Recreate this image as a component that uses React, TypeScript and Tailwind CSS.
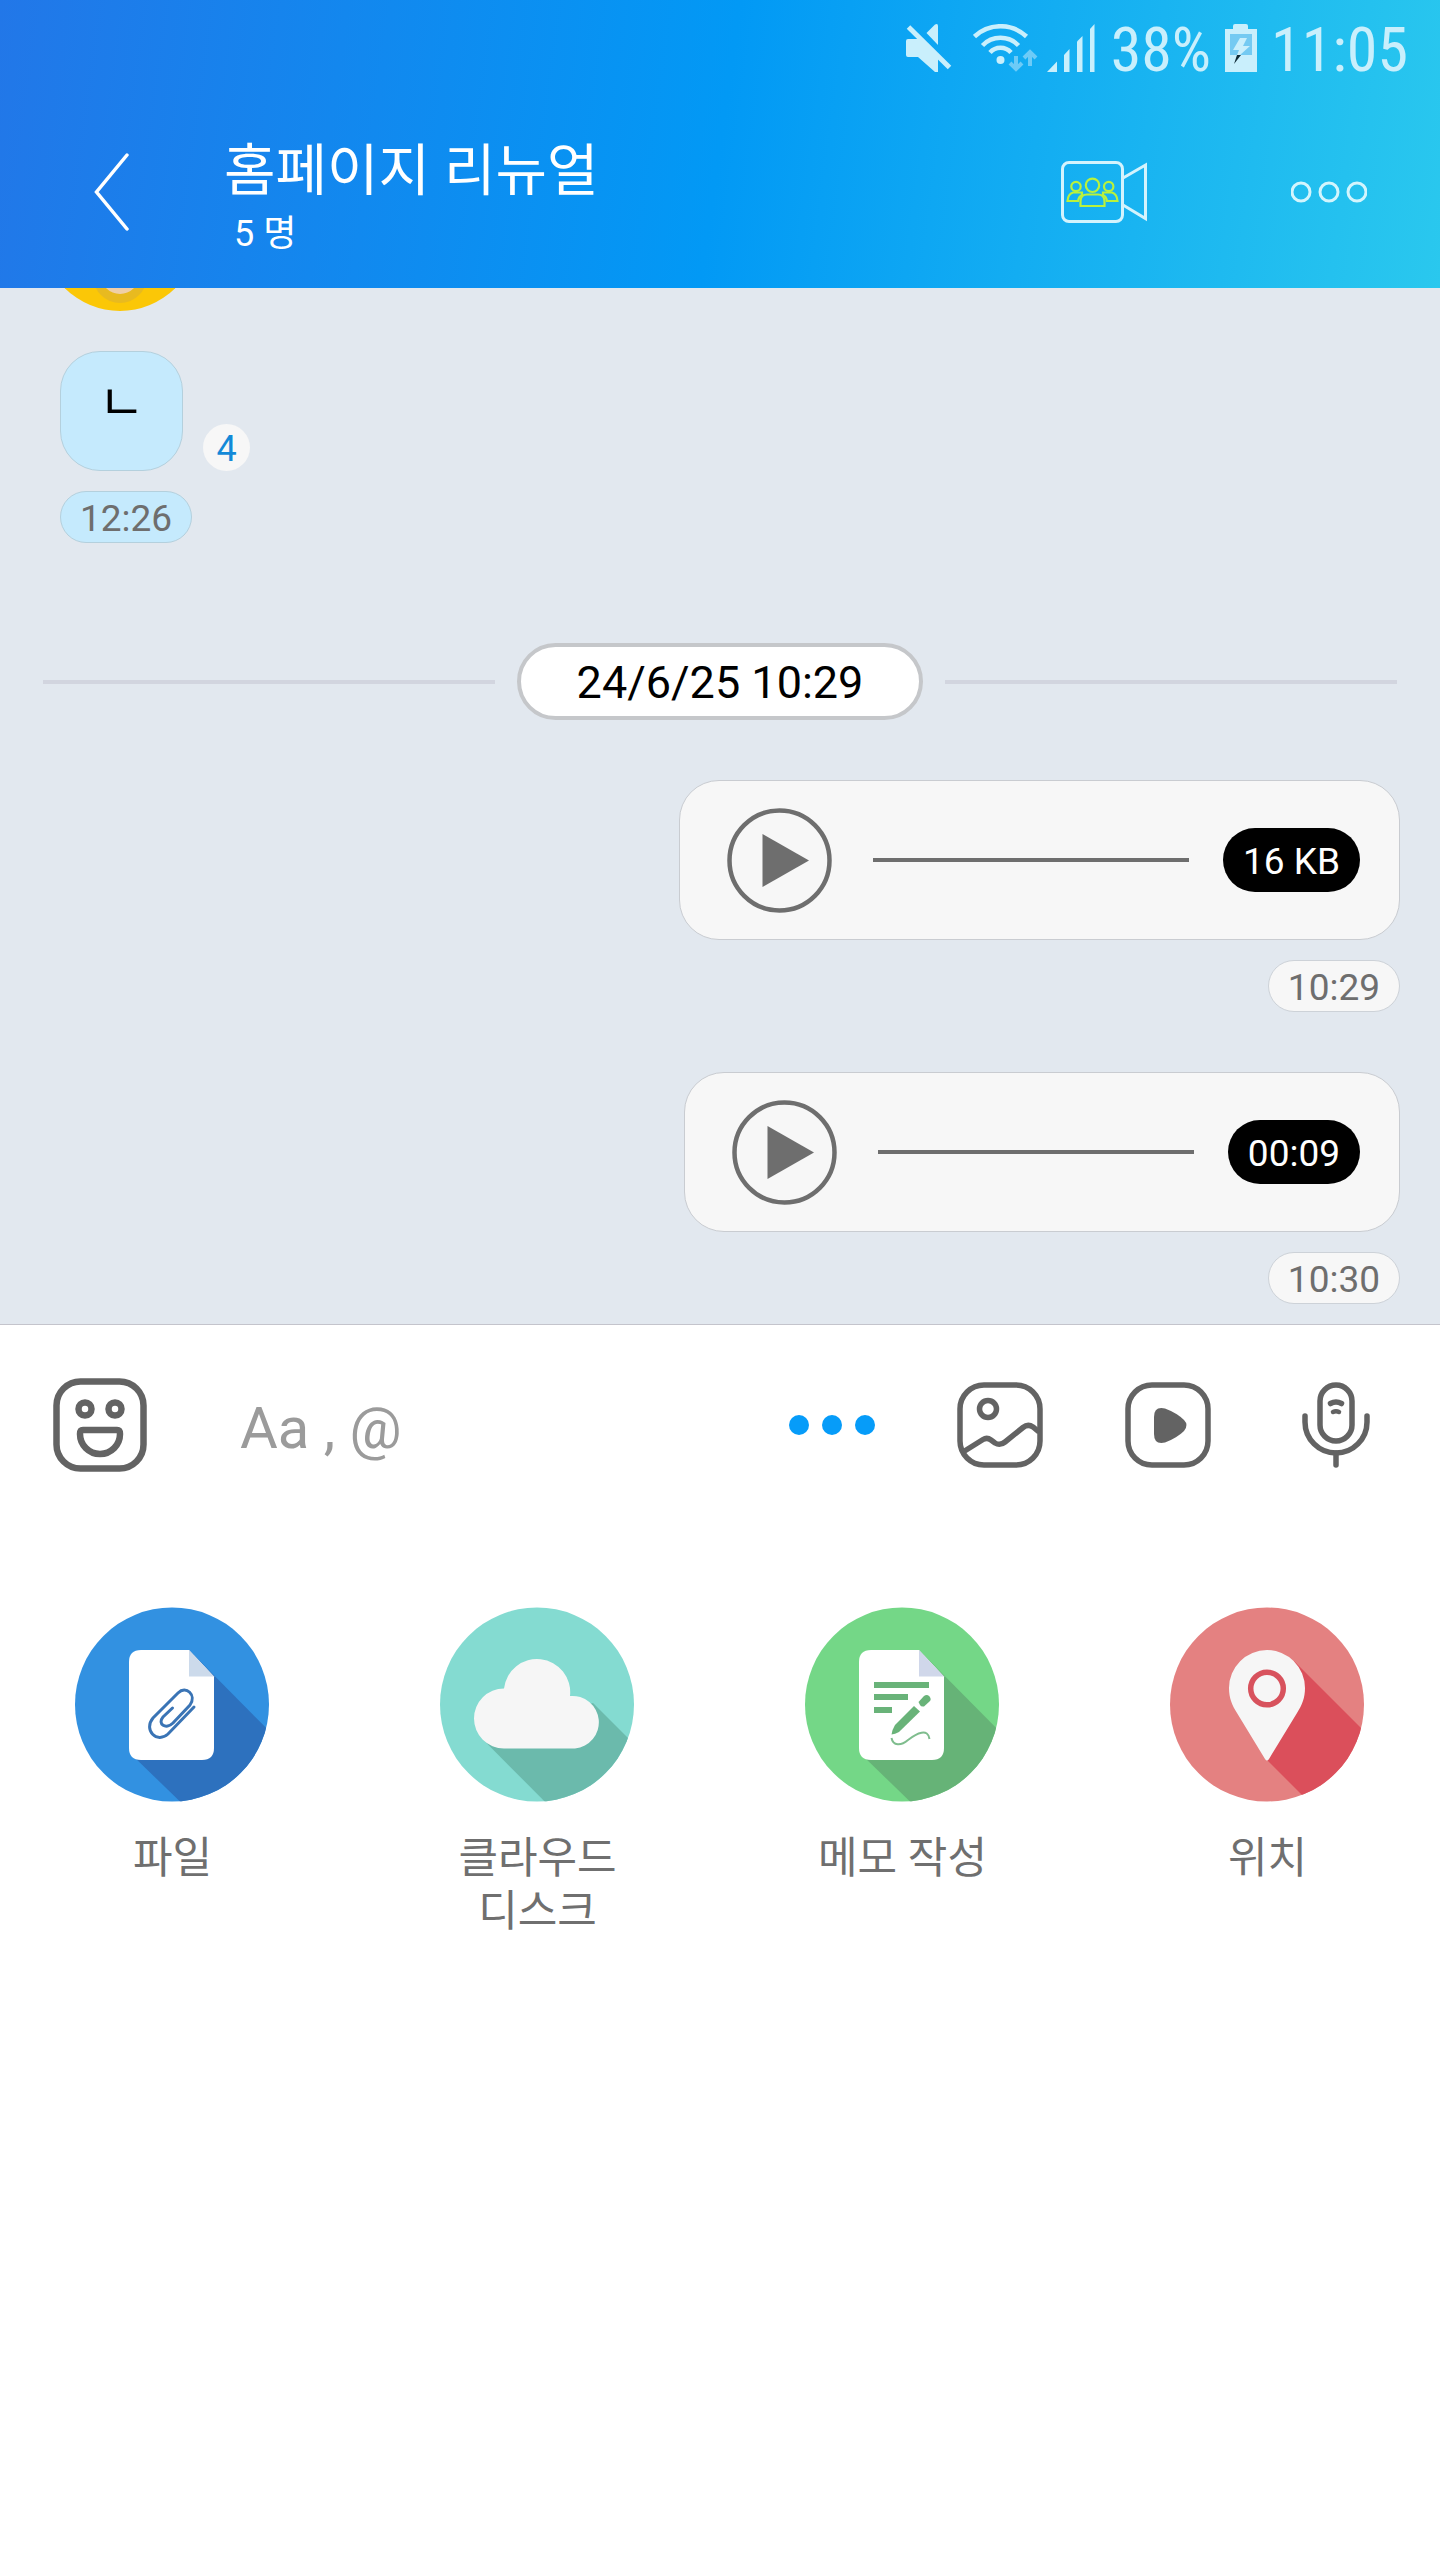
import type { ReactNode } from 'react';

interface VoiceMessage {
  id: number;
  badge: string;
  time: string;
}

const voiceMessages: VoiceMessage[] = [
  { id: 1, badge: '16 KB', time: '10:29' },
  { id: 2, badge: '00:09', time: '10:30' },
];

/* ---------- status bar icons ---------- */

function MuteIcon() {
  return (
    <svg width="46" height="48" viewBox="0 0 46 48" fill="currentColor" aria-hidden="true">
      <path d="M29 .5 Q32 -1 32 2 V21 L20.5 9z" />
      <path d="M2 15 H14 L17 16 L32 33 V48 H29 L12 33 H2 Q0 33 0 31 V17 Q0 15 2 15z" />
      <path d="M2.5 3 L43.5 43.5" stroke="currentColor" strokeWidth="5" />
    </svg>
  );
}

function WifiIcon() {
  return (
    <svg width="66" height="48" viewBox="0 0 66 48" fill="none" aria-hidden="true">
      <g stroke="currentColor" strokeWidth="4.5">
        <path d="M1.5 12.5 A38 38 0 0 1 53.5 12.5" />
        <path d="M9.5 21.5 A25 25 0 0 1 45.5 21.5" />
        <path d="M17 28.5 A14 14 0 0 1 38 28.5" />
      </g>
      <circle cx="27.5" cy="36" r="4" fill="currentColor" />
      <g stroke="#6dcbf7" strokeWidth="4">
        <path d="M43 32 V45 M37 39 L43 45 L49 39" />
        <path d="M57 42 V29 M51 34 L57 28 L63 34" />
      </g>
    </svg>
  );
}

function SignalIcon() {
  return (
    <svg width="48" height="48" viewBox="0 0 48 48" fill="currentColor" aria-hidden="true">
      <path d="M0 48 L10 37.5 V48z" />
      <path d="M17 31 L22.5 25 V48 H17z" />
      <path d="M30 17.5 L35.5 12 V48 H30z" />
      <path d="M43 5 L47.5 0 V48 H43z" />
    </svg>
  );
}

function BatteryIcon() {
  return (
    <svg width="32" height="48" viewBox="0 0 32 48" aria-hidden="true">
      <path d="M8 5 V2 Q8 0 10 0 H21 Q23 0 23 2 V5 H32 V48 H0 V5z" fill="currentColor" />
      <path d="M5 10 H27 V31 H5z" fill="#74caf2" />
      <path d="M15 14 H22 L18 22 H25 L15 31 H12 L14 26 H8z" fill="#c9effc" />
      <path d="M12 31 H16 L9 40z" fill="#0d2a36" />
    </svg>
  );
}

/* ---------- header icons ---------- */

function BackIcon() {
  return (
    <svg width="36" height="78" viewBox="0 0 36 78" fill="none" aria-hidden="true">
      <path d="M33 2 L2.5 39 L33 76" stroke="#fff" strokeWidth="3.5" strokeLinecap="round" />
    </svg>
  );
}

function GroupVideoIcon() {
  return (
    <svg width="87" height="62" viewBox="0 0 87 62" fill="none" aria-hidden="true">
      <g stroke="#d3f3fd" strokeWidth="3">
        <rect x="1.5" y="1.5" width="60" height="59" rx="6.5" />
        <path d="M62 17 L84.5 4 V57.5 L62 44" />
      </g>
      <g stroke="#b9f23c" strokeWidth="2.2">
        <circle cx="31.5" cy="24.3" r="6.7" />
        <path d="M19.5 45 V40 Q20 33.5 26 33.5 H37 Q43 33.5 43.5 40 V45z" />
        <circle cx="15" cy="25.5" r="4.7" />
        <circle cx="47.7" cy="25.5" r="4.7" />
        <path d="M21 31.5 H12 Q7 33 6.5 40 H17 Q18 35 21 34z" />
        <path d="M42 31.5 H51 Q56 33 56.5 40 H46 Q45 35 42 34z" />
      </g>
    </svg>
  );
}

function MenuIcon() {
  return (
    <svg width="76" height="22" viewBox="0 0 76 22" fill="none" stroke="#d3f5fd" strokeWidth="3" aria-hidden="true">
      <circle cx="10" cy="11" r="9" />
      <circle cx="38" cy="11" r="9" />
      <circle cx="66" cy="11" r="9" />
    </svg>
  );
}

/* ---------- composer icons ---------- */

function StickerIcon() {
  return (
    <svg width="94" height="94" viewBox="0 0 94 94" fill="none" stroke="#636363" strokeWidth="6.5" aria-hidden="true">
      <rect x="3.5" y="3.5" width="87" height="87" rx="24" />
      <circle cx="32" cy="31" r="6.5" />
      <circle cx="62" cy="31" r="6.5" />
      <path d="M30 52 H64 Q67 52 67 56 A20 20 0 0 1 27 56 Q27 52 30 52z" />
    </svg>
  );
}

function MoreIcon() {
  return (
    <svg width="88" height="22" viewBox="0 0 88 22" fill="#069cf9" aria-hidden="true">
      <circle cx="11" cy="11" r="10" />
      <circle cx="44" cy="11" r="10" />
      <circle cx="77" cy="11" r="10" />
    </svg>
  );
}

function GalleryIcon() {
  return (
    <svg width="86" height="86" viewBox="0 0 86 86" fill="none" stroke="#636363" strokeWidth="5.5" aria-hidden="true">
      <rect x="3" y="3" width="80" height="80" rx="24" />
      <circle cx="31" cy="27" r="8.5" />
      <path d="M6 70 L26 57.5 Q30 55 34 58 L38 61 Q43 64 48 60 L66 45.5 Q71 41.5 76 45 L82 50" />
    </svg>
  );
}

function VideoIcon() {
  return (
    <svg width="86" height="86" viewBox="0 0 86 86" fill="none" aria-hidden="true">
      <rect x="3" y="3" width="80" height="80" rx="24" stroke="#636363" strokeWidth="5.5" />
      <path
        d="M29 35 Q29 24 40 26.5 Q52 31 59 38 Q64 43 59 49 Q52 56 40 60.5 Q29 63 29 52z"
        fill="#636363"
      />
    </svg>
  );
}

function MicIcon() {
  return (
    <svg width="70" height="86" viewBox="0 0 70 86" fill="none" stroke="#636363" strokeWidth="5.5" strokeLinecap="round" aria-hidden="true">
      <rect x="19" y="3" width="32" height="56" rx="16" />
      <path d="M4 34 V40 A31 31 0 0 0 66 40 V34" />
      <path d="M35 71 V83" />
      <path d="M29.5 21.5 Q35 18.5 40.5 21.5" />
      <path d="M32 30 Q35 28.5 38 30" strokeWidth="4.5" />
    </svg>
  );
}

/* ---------- attachment icons ---------- */

interface RoundIconProps {
  id: string;
  color: string;
  shade: string;
  shadow: string;
  children: ReactNode;
}

// Flat disc with a 45 degree long shadow cut off at its edge
function RoundIcon({ id, color, shade, shadow, children }: RoundIconProps) {
  return (
    <svg width="195" height="195" viewBox="0 0 195 195" fill="none" aria-hidden="true">
      <clipPath id={id}>
        <circle cx="97" cy="97.5" r="97" />
      </clipPath>
      <g clipPath={`url(#${id})`}>
        <rect width="195" height="195" fill={color} />
        <path d={shadow} fill={shade} />
      </g>
      {children}
    </svg>
  );
}

function Sheet({ fold }: { fold: string }) {
  return (
    <>
      <path d="M114 43 H66 Q54 43 54 55 V141 Q54 153 66 153 H127 Q139 153 139 141 V69.5z" fill="#fff" />
      <path d="M114 43 L139 69.5 H114z" fill={fold} />
    </>
  );
}

const sheetShadow = 'M114 43 L210 140 V210 H121 L58 149z';

function FileIcon() {
  return (
    <RoundIcon id="disc-file" color="#3291e1" shade="#2d71be" shadow={sheetShadow}>
      <Sheet fold="#ccdaeb" />
      <path
        d="M119 100 L93 127 C82 137 68 123 78 111 L103 86 C111 78 122 88 115 98 L98 116 C91 123 82 117 88 110 L97.5 101"
        stroke="#3a74b5"
        strokeWidth="3"
        strokeLinecap="round"
      />
    </RoundIcon>
  );
}

function CloudIcon() {
  return (
    <RoundIcon id="disc-cloud" color="#84dbd1" shade="#6bbaac" shadow="M153 96 L220 163 V220 H130 L43 132.5z">
      <path
        d="M64 141.5 A30 30 0 0 1 64 81.5 A33 33 0 0 1 130 89 A26.3 26.3 0 0 1 135 141.5z"
        fill="#f6f6f6"
      />
    </RoundIcon>
  );
}

function MemoIcon() {
  return (
    <RoundIcon id="disc-memo" color="#74d787" shade="#66b377" shadow={sheetShadow}>
      <Sheet fold="#d0d7ea" />
      <g fill="#69b379">
        <rect x="69" y="75" width="55" height="6" />
        <rect x="69" y="87" width="34" height="6" />
        <rect x="69" y="100" width="18" height="6" />
        <path d="M109 99 L115 104.5 L94 125 Q90 127 86.5 127.5 Q87 123 90 118z" />
        <path d="M113.5 95 L119 89 Q122 87 124.5 89.5 Q126.5 92 125 94 L119 99.5 Q116 100 115 98z" />
      </g>
      <path d="M86.5 131 C88 139 96 139 103 133 C112 126 123 121 124.5 132" stroke="#7fbd8e" strokeWidth="2" />
    </RoundIcon>
  );
}

function PinIcon() {
  return (
    <RoundIcon id="disc-pin" color="#e48181" shade="#db4f5b" shadow="M124 54 L220 150 V220 H164 L95 151z">
      <path
        d="M97 43 A38 38 0 0 1 135 81 C135 91 132 98 127 106 L99 152 Q97 155 95 152 L67 106 C62 98 59 91 59 81 A38 38 0 0 1 97 43z"
        fill="#f6f6f6"
      />
      <circle cx="97" cy="81.5" r="16.3" stroke="#d8525d" strokeWidth="5.5" />
    </RoundIcon>
  );
}

/* ---------- pieces ---------- */

function TimePill({ time, className }: { time: string; className: string }) {
  return (
    <time
      className={`flex h-[52px] items-center rounded-full border px-[19px] pt-0.5 text-[37px] leading-none text-[#6e6e6e] ${className}`}
    >
      {time}
    </time>
  );
}

function VoiceBubble({ message }: { message: VoiceMessage }) {
  return (
    <div className="flex flex-col items-end gap-5">
      <div className="flex h-40 items-center rounded-[40px] border border-[#c9ccd1] bg-[#f7f7f7] pr-[39px] pl-[47px]">
        <button type="button" aria-label="재생">
          <svg width="105" height="105" viewBox="0 0 105 105" fill="none" className="block" aria-hidden="true">
            <circle cx="52.5" cy="52.5" r="50" stroke="#6e6e6e" strokeWidth="4.5" />
            <path d="M35.5 26 L82 52.5 L35.5 79z" fill="#6e6e6e" />
          </svg>
        </button>
        <div className="mr-[34px] ml-[41px] h-1 w-[316px] bg-[#6e6e6e]" />
        <span className="flex h-16 items-center rounded-full bg-black px-5 pt-0.5 text-[37px] leading-none text-white">
          {message.badge}
        </span>
      </div>
      <TimePill time={message.time} className="border-[#cdd2d8] bg-[#f7f7f7]" />
    </div>
  );
}

function ComposerButton({ label, children }: { label: string; children: ReactNode }) {
  return (
    <button type="button" aria-label={label} className="flex h-24 w-[168px] items-center justify-center">
      {children}
    </button>
  );
}

function Attachment({ label, children }: { label: ReactNode; children: ReactNode }) {
  return (
    <button
      type="button"
      className="flex w-[195px] flex-col items-center gap-[30px] text-[43px] leading-[53px] text-[#6f6f6f]"
    >
      {children}
      <span>{label}</span>
    </button>
  );
}

export default function App() {
  return (
    <div className="flex min-h-screen flex-col bg-white font-['Roboto','Noto_Sans_CJK_KR',sans-serif]">
      <header className="bg-[linear-gradient(98deg,#2277e8_0%,#0299f5_50%,#2ac8ee_100%)]">
        <div className="flex h-24 items-center justify-end pr-8 font-['Roboto_Condensed','Roboto',sans-serif] text-[62px] leading-none text-[#c9effc]">
          <MuteIcon />
          <div className="ml-[21px]">
            <WifiIcon />
          </div>
          <div className="ml-2">
            <SignalIcon />
          </div>
          <span className="ml-4 pt-1">38%</span>
          <div className="mx-3.5">
            <BatteryIcon />
          </div>
          <time className="pt-1">11:05</time>
        </div>

        <div className="flex h-48 items-center pr-[73px] pl-[94px] text-white">
          <button type="button" aria-label="뒤로">
            <BackIcon />
          </button>
          <div className="ml-[94px] flex-1 pt-4">
            <h1 className="text-[56px] leading-[68px]">홈페이지 리뉴얼</h1>
            <p className="pl-2.5 text-[36px] leading-[58px]">5 명</p>
          </div>
          <button type="button" aria-label="그룹 영상 통화">
            <GroupVideoIcon />
          </button>
          <button type="button" aria-label="메뉴" className="ml-[143px]">
            <MenuIcon />
          </button>
        </div>
      </header>

      <main className="flex flex-col border-b border-[#c4c4cc] bg-[#e2e8ef] pb-5">
        <div className="flex flex-col items-start pl-[60px]">
          {/* bottom of the avatar that has scrolled under the header */}
          <svg width="120" height="23" viewBox="0 0 120 23" fill="none" aria-hidden="true">
            <circle cx="60" cy="-55" r="78" fill="#fbc707" />
            <circle cx="60" cy="-12" r="27" fill="#e8ba20" />
            <circle cx="60" cy="-13" r="19" fill="#efcfa8" />
          </svg>
          <div className="mt-10 flex items-end gap-5">
            <p className="flex h-[120px] w-[123px] items-center justify-center rounded-[40px] border border-[#b4d0dd] bg-[#c5eafd] pb-4 text-[50px] leading-none text-black">
              ㄴ
            </p>
            <span className="flex h-[47px] w-[47px] items-center justify-center rounded-full bg-[#f7f7f7] pt-0.5 text-[36px] leading-none text-[#1389d8]">
              4
            </span>
          </div>
          <TimePill time="12:26" className="mt-5 border-[#b4d0dd] bg-[#c5eafd]" />
        </div>

        <div className="mx-[43px] mt-[100px] flex items-center gap-[22px]">
          <div className="h-1 flex-1 bg-[#d2d5df]" />
          <time className="flex h-[77px] items-center rounded-full border-4 border-[#c5c7ca] bg-white px-14 pt-0.5 text-[45px] leading-none text-black">
            24/6/25 10:29
          </time>
          <div className="h-1 flex-1 bg-[#d2d5df]" />
        </div>

        <div className="mt-[60px] flex flex-col gap-[60px] pr-10">
          {voiceMessages.map((message) => (
            <VoiceBubble key={message.id} message={message} />
          ))}
        </div>
      </main>

      <form className="flex h-[200px] items-center pr-5 pl-[53px]">
        <button type="button" aria-label="이모티콘">
          <StickerIcon />
        </button>
        <input
          type="text"
          aria-label="메시지 입력"
          placeholder="Aa , @"
          className="ml-[93px] h-24 min-w-0 flex-1 bg-transparent pt-1.5 text-[58px] text-[#333] outline-none placeholder:text-[#9b9b9b]"
        />
        <ComposerButton label="더보기">
          <MoreIcon />
        </ComposerButton>
        <ComposerButton label="사진">
          <GalleryIcon />
        </ComposerButton>
        <ComposerButton label="동영상">
          <VideoIcon />
        </ComposerButton>
        <ComposerButton label="음성">
          <MicIcon />
        </ComposerButton>
      </form>

      <section className="flex items-start justify-between px-[75px] pt-[82px]">
        <Attachment label="파일">
          <FileIcon />
        </Attachment>
        <Attachment
          label={
            <>
              클라우드
              <br />
              디스크
            </>
          }
        >
          <CloudIcon />
        </Attachment>
        <Attachment label="메모 작성">
          <MemoIcon />
        </Attachment>
        <Attachment label="위치">
          <PinIcon />
        </Attachment>
      </section>
    </div>
  );
}
